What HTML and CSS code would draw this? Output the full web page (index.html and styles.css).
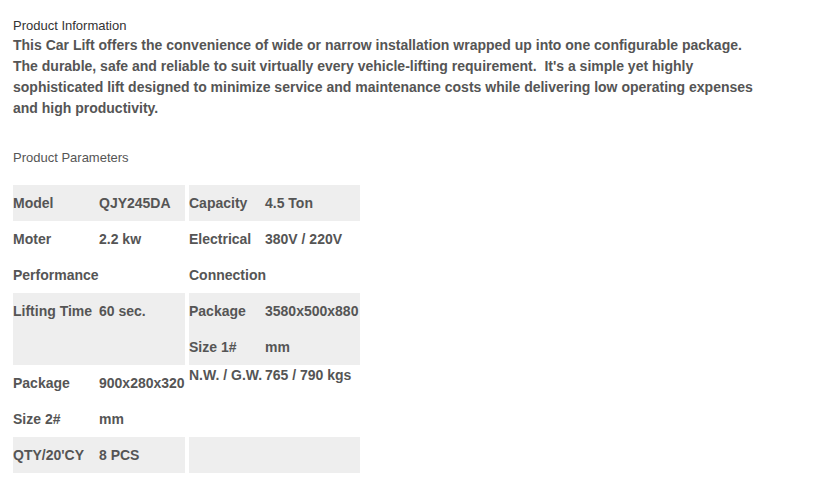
FILE: index.html
```html
<!DOCTYPE html>
<html>
<head>
<meta charset="utf-8">
<link rel="stylesheet" href="styles.css">
</head>
<body>
<div class="page">
  <div class="title">Product Information</div>
  <p class="desc">This Car Lift offers the convenience of wide or narrow installation wrapped up into one configurable package.<br>The durable, safe and reliable to suit virtually every vehicle-lifting requirement.&nbsp; It's a simple yet highly<br>sophisticated lift designed to minimize service and maintenance costs while delivering low operating expenses<br>and high productivity.</p>
  <div class="subtitle">Product Parameters</div>
  <div class="params">
    <div class="cell gray left"><span>Model</span><span>QJY245DA</span></div>
    <div class="cell gray right"><span>Capacity</span><span>4.5 Ton</span></div>

    <div class="cell left"><span>Moter</span><span>2.2 kw</span></div>
    <div class="cell right"><span>Electrical</span><span>380V / 220V</span></div>

    <div class="cell left"><span>Performance</span><span></span></div>
    <div class="cell right"><span>Connection</span><span></span></div>

    <div class="cell gray left tall"><span>Lifting Time</span><span>60 sec.</span></div>
    <div class="cell gray right tall"><span>Package</span><span>3580x500x880</span><span>Size 1#</span><span>mm</span></div>

    <div class="cell left tall"><span>Package</span><span>900x280x320</span><span>Size 2#</span><span>mm</span></div>
    <div class="cell right tall top"><span>N.W. / G.W.</span><span>765 / 790 kgs</span></div>

    <div class="cell gray left"><span>QTY/20'CY</span><span>8 PCS</span></div>
    <div class="cell gray right"></div>
  </div>
</div>
</body>
</html>
```

FILE: styles.css
```css
html, body {
  margin: 0;
  padding: 0;
  background: #ffffff;
}
.page {
  padding: 18px 13px 0 13px;
  font-family: "Liberation Sans", Arial, sans-serif;
}
.title {
  font-size: 13px;
  line-height: 16px;
  color: #333333;
}
.desc {
  margin: 1px 0 0 0;
  font-size: 14px;
  font-weight: bold;
  line-height: 21px;
  color: #555555;
}
.subtitle {
  margin-top: 31px;
  font-size: 13px;
  line-height: 16px;
  color: #555555;
}
.params {
  margin-top: 19px;
  display: grid;
  grid-template-columns: 172px 171px;
  column-gap: 4px;
  font-size: 14px;
  font-weight: bold;
  color: #555555;
}
.cell {
  display: grid;
  align-content: start;
  min-height: 36px;
  line-height: 36px;
  white-space: nowrap;
}
.cell.left {
  grid-template-columns: 86px 1fr;
}
.cell.right {
  grid-template-columns: 76px 1fr;
}
.cell.tall {
  min-height: 72px;
}
.cell.top {
  line-height: 20px;
}
.gray {
  background: #eeeeee;
}
```
